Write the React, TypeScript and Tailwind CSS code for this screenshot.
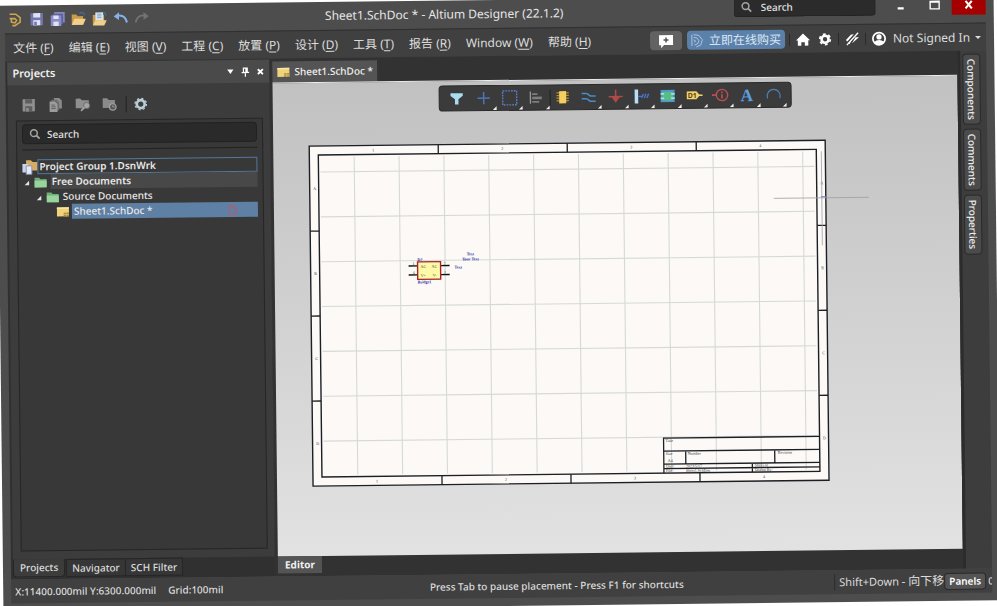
import type { ReactNode } from 'react';

const menus = [
    { label: '文件', hotkey: 'F' },
    { label: '编辑', hotkey: 'E' },
    { label: '视图', hotkey: 'V' },
    { label: '工程', hotkey: 'C' },
    { label: '放置', hotkey: 'P' },
    { label: '设计', hotkey: 'D' },
    { label: '工具', hotkey: 'T' },
    { label: '报告', hotkey: 'R' },
    { label: 'Window', hotkey: 'W' },
    { label: '帮助', hotkey: 'H' }
];

const Icon = ({ children, className = 'w-3.5 h-3.5' }: { children: ReactNode; className?: string }) => (
    <svg viewBox="0 0 16 16" fill="none" className={`${className} shrink-0 overflow-visible`} aria-hidden="true">
        {children}
    </svg>
);

const Magnifier = () => (
    <Icon className="w-3 h-3">
        <circle cx="6.5" cy="6.5" r="4.5" stroke="#a4a4a4" strokeWidth="2" />
        <path d="M10 10l4 4" stroke="#a4a4a4" strokeWidth="2.4" />
    </Icon>
);

const Floppy = ({ body, label }: { body: string; label: string }) => (
    <>
        <path d="M1 1h14v14H1z" fill={body} />
        <path d="M4 1h8v5H4zM4 9h8v6H4z" fill={label} />
        <path d="M5 11h3v4H5z" fill={body} />
    </>
);

const SheetIcon = () => (
    <Icon className="w-3.5 h-3">
        <path d="M0 2h16v12H0z" fill="#f0d27a" />
        <path d="M0 2h16v2H0z" fill="#fae6a4" />
        <path d="M9 9h7v5H9z" fill="#a88b42" />
        <path d="M9 11.5h7M12.5 9v5" stroke="#e0c068" />
    </Icon>
);

const FolderIcon = () => (
    <Icon className="w-3 h-3">
        <path d="M0 2h6l2 2h8v11H0z" fill="#6fae78" />
        <path d="M0 6h16v9H0z" fill="#98d59c" />
    </Icon>
);

const Expander = () => (
    <Icon className="w-2 h-2">
        <path d="M13 5v9H4z" fill="#e4e4e4" />
    </Icon>
);

const quickActions = [
    {
        name: 'Save',
        icon: <Floppy body="#7377ad" label="#dfe1f5" />
    },
    {
        name: 'Save all',
        icon: (
            <>
                <path d="M4 0h12v12H4z" fill="#8488bf" />
                <path d="M2 2h12v12H2z" fill="#5e6299" />
                <path d="M0 4h12v12H0z" fill="#8a8ec8" />
                <path d="M3 4h6v4H3zM3 11h6v5H3z" fill="#dfe1f5" />
            </>
        )
    },
    {
        name: 'Open',
        icon: (
            <>
                <path d="M0 3h5l2 2h6v10H0z" fill="#c99b49" />
                <path d="M3 8h13l-3 7H0z" fill="#f2d08b" />
                <path d="M9 2q4-3 6 2" stroke="#3c6f96" strokeWidth="1.5" />
            </>
        )
    },
    {
        name: 'Open project',
        icon: (
            <>
                <path d="M0 4h13v11H0z" fill="#c99b49" />
                <path d="M3 1h9v9H3z" fill="#d6e5f1" />
                <path d="M5 3h5M5 5h5M5 7h5" stroke="#7d9cb8" />
                <path d="M3 10h13l-3 6H0z" fill="#f2d08b" />
                <path d="M12 1q3 0 3 4" stroke="#3c6f96" strokeWidth="1.5" />
            </>
        )
    },
    {
        name: 'Undo',
        icon: (
            <>
                <path d="M5 5q8-1 10 8" stroke="#86b1e8" strokeWidth="2.4" />
                <path d="M0 6l6-5v9z" fill="#86b1e8" />
            </>
        )
    },
    {
        name: 'Redo',
        icon: (
            <>
                <path d="M11 5Q3 4 1 13" stroke="#737373" strokeWidth="2" />
                <path d="M16 6l-6-5v9z" fill="#737373" />
            </>
        )
    }
];

const projectActions = [
    { name: 'Save document', icon: <Floppy body="#8f8f8f" label="#5e5e5e" /> },
    {
        name: 'Compile',
        icon: (
            <>
                <path d="M6 0h6l3 3v9H6z" fill="#8a8a8a" />
                <path d="M3 2h6l3 3v9H3z" fill="#6b6b6b" />
                <path d="M1 4h6l3 3v9H1z" fill="#9c9c9c" />
                <path d="M3 8h4M3 10h5M3 12h5" stroke="#5c5c5c" />
            </>
        )
    },
    {
        name: 'Explore folder',
        icon: (
            <>
                <path d="M0 1h5l2 2h8v9H0z" fill="#8f8f8f" />
                <circle cx="12.5" cy="9" r="3.5" fill="#a4a4a4" stroke="#666" />
                <path d="M10 11l-4 4" stroke="#a4a4a4" strokeWidth="2" />
            </>
        )
    },
    {
        name: 'Folder history',
        icon: (
            <>
                <path d="M0 1h5l2 2h7v9H0z" fill="#8a8a8a" />
                <circle cx="11.5" cy="11" r="3.7" fill="#555" stroke="#a4a4a4" strokeWidth="1.4" />
                <path d="M11.5 9v2h2" stroke="#a4a4a4" />
            </>
        )
    }
];

const tools = [
    { name: 'Filter', more: false, icon: <path d="M1 2h14v3l-5 4v6H6V9L1 5z" fill="#a9dcec" /> },
    { name: 'Move', more: true, icon: <path d="M8 1v14M1 8h14" stroke="#4d76b8" strokeWidth="1.7" /> },
    {
        name: 'Select area',
        more: true,
        icon: <path d="M0 0h16v16H0z" stroke="#5a7fd0" strokeWidth="1.6" strokeDasharray="2 1.2" />
    },
    {
        name: 'Align',
        more: true,
        icon: (
            <>
                <path d="M2 1v14" stroke="#999" strokeWidth="1.5" />
                <path d="M4 3h6v2H4zM4 7h11v3H4zM4 12h8v2H4z" fill="#7d7d7d" />
            </>
        )
    },
    {
        name: 'Place part',
        more: false,
        icon: (
            <>
                <path d="M1 3h14M1 6h14M1 9h14M1 12h14" stroke="#b98e33" strokeWidth="1.4" />
                <path d="M4 1h8v14H4z" fill="#f4cf60" />
            </>
        )
    },
    {
        name: 'Place wire',
        more: true,
        icon: (
            <path d="M0 4h5q2 0 3 1.500t3 1.500h5M0 10h5q2 0 3 1.500t3 1.500h5" stroke="#4a8cc4" strokeWidth="1.7" />
        )
    },
    {
        name: 'Place power port',
        more: true,
        icon: (
            <>
                <path d="M8 0v9M0 8h16" stroke="#b04a48" strokeWidth="1.8" />
                <path d="M3 8h10l-5 7z" fill="#b04a48" />
            </>
        )
    },
    {
        name: 'Place harness',
        more: true,
        icon: (
            <>
                <path d="M0 0h4v16H0z" fill="#b8e0f6" />
                <path d="M4 8h4" stroke="#4d76d8" strokeWidth="1.5" />
                <path d="M8 10l2-5M11 10l2-5M14 10l2-5" stroke="#4d76d8" strokeWidth="1.5" />
            </>
        )
    },
    {
        name: 'Place sheet symbol',
        more: true,
        icon: (
            <>
                <path d="M1 2h14v12H1z" fill="#59bb88" stroke="#4f94d2" strokeWidth="2" />
                <path d="M0 5.500h4M0 10.500h4M12 5.500h4M12 10.500h4" stroke="#a6e5ca" strokeWidth="2" />
            </>
        )
    },
    {
        name: 'Place port',
        more: true,
        icon: (
            <>
                <path d="M-1 3h11l4 4.500-4 4.500H-1z" fill="#f3d36c" />
                <path d="M13 7.500h4" stroke="#f3d36c" strokeWidth="1.5" />
                <text x="0" y="10.500" fontSize="8" fontWeight="700" fill="#5a4414">D1</text>
            </>
        )
    },
    {
        name: 'Place directive',
        more: true,
        icon: (
            <>
                <circle cx="9.500" cy="7.500" r="6.500" stroke="#c24f50" strokeWidth="1.5" />
                <path d="M-2 7.500h6M9.500 6.500v5M9.500 3.500v2" stroke="#c24f50" strokeWidth="1.8" />
            </>
        )
    },
    {
        name: 'Place text',
        more: true,
        icon: (
            <text x="8" y="15" textAnchor="middle" fontSize="20" fontWeight="700" fontFamily="Liberation Serif, serif" fill="#5c9fe0">
                A
            </text>
        )
    },
    { name: 'Place arc', more: true, icon: <path d="M1 12A7.500 7.500 0 1 1 15 12" stroke="#4a7fb4" strokeWidth="1.4" /> }
];

const MenuDivider = () => <span className="w-px h-3 bg-[#2a2a2a]" />;

function TitleBar() {
    return (
        <header className="flex items-start h-7 pl-3 pr-2">
            <div className="flex items-center gap-[7px] h-7">
                <Icon>
                    <path d="M1 2h7l5 4v5l-6 4H4M1 7h6l2 2-2 3-4-1V8" stroke="#cda550" strokeWidth="1.8" />
                </Icon>
                {quickActions.map((action) => (
                    <button key={action.name} aria-label={action.name}>
                        <Icon>{action.icon}</Icon>
                    </button>
                ))}
            </div>
            <h1 className="flex-1 pl-1.5 text-center text-xs leading-7 text-[#e6e6e6] whitespace-nowrap">
                Sheet1.SchDoc * - Altium Designer (22.1.2)
            </h1>
            <label className="flex items-center gap-2 w-[142px] h-5 px-1.5 mr-2 rounded-b bg-[#2b2b2b] border border-t-0 border-[#222]">
                <Magnifier />
                <input
                    aria-label="Search commands"
                    placeholder="Search"
                    className="w-full bg-transparent text-[10px] leading-4 font-medium placeholder:text-[#e0e0e0] outline-none"
                />
            </label>
            <button aria-label="Minimize" className="flex items-center justify-center w-[34px] h-5">
                <Icon className="w-3 h-3"><path d="M4 12h8" stroke="#fff" strokeWidth="3" /></Icon>
            </button>
            <button aria-label="Maximize" className="flex items-center justify-center w-[34px] h-5">
                <Icon className="w-3 h-3"><path d="M2 3h12v10H2zM2 4h12" stroke="#fff" strokeWidth="1.8" /></Icon>
            </button>
            <button aria-label="Close" className="flex items-center justify-center w-[34px] h-5 bg-[#a50000]">
                <Icon className="w-2.5 h-2.5"><path d="M3 2l10 12M13 2L3 14" stroke="#fff" strokeWidth="3.400" /></Icon>
            </button>
        </header>
    );
}

function MenuBar() {
    return (
        <div className="flex items-center justify-between h-7 mx-2 pl-2 border-t border-[#303030] bg-[#404040] text-xs whitespace-nowrap">
            <nav className="flex gap-[15px]">
                {menus.map((menu) => (
                    <button key={menu.hotkey} className="text-[#dcdcdc]">
                        {menu.label} (<span className="underline underline-offset-2">{menu.hotkey}</span>)
                    </button>
                ))}
            </nav>
            <div className="flex items-center">
                <button aria-label="Feedback" className="flex items-center justify-center w-8 h-[19px] mr-[5px] rounded-sm bg-[#626262]">
                    <Icon className="w-4 h-4">
                        <path d="M1 2h14v10H6l-3 3v-3H1z" fill="#fff" />
                        <path d="M8 4.500v5M5.500 7h5" stroke="#555" strokeWidth="1.5" />
                    </Icon>
                </button>
                <button className="flex items-center gap-1 h-[19px] px-1 rounded-sm bg-[#5b81aa] text-[#dce8f4]">
                    <Icon>
                        <path d="M3 1l6 1 4 5-2 6-5 2M3 4l4 1 2 3-1 3-4 2M3 7l2 1-1 2M1 1v13" stroke="#b4cde6" />
                    </Icon>
                    立即在线购买
                </button>
                <div className="flex items-center gap-1.5 ml-1">
                    <MenuDivider />
                    <button aria-label="Home">
                        <Icon><path d="M8 1L0 9h2v6h4v-4h4v4h4V9h2z" fill="#fff" /></Icon>
                    </button>
                    <button aria-label="Settings" className="ml-0.5">
                        <Icon>
                            <circle cx="8" cy="8" r="4" stroke="#fff" strokeWidth="3" />
                            <circle cx="8" cy="8" r="6" stroke="#fff" strokeWidth="2" strokeDasharray="3.140 3.140" />
                        </Icon>
                    </button>
                    <MenuDivider />
                    <button aria-label="Notifications off">
                        <Icon>
                            <path d="M1 9l6-6h4L5 14zM8 13l4-7h4z" fill="#fff" />
                            <path d="M14 0L1 14" stroke="#404040" strokeWidth="2" />
                            <path d="M15 1L2 15" stroke="#fff" strokeWidth="1.5" />
                        </Icon>
                    </button>
                    <MenuDivider />
                </div>
                <button className="flex items-center gap-[7px] ml-1.5 pr-[5px] text-[#dcdcdc]">
                    <Icon>
                        <circle cx="8" cy="8" r="7" stroke="#fff" strokeWidth="2" />
                        <circle cx="8" cy="6" r="3" fill="#fff" />
                        <path d="M2 12q6-5 12 0-6 6-12 0z" fill="#fff" />
                    </Icon>
                    Not Signed In
                    <Icon className="w-1.5 h-1.5 -ml-0.5"><path d="M0 4h16l-8 8z" fill="#ddd" /></Icon>
                </button>
            </div>
        </div>
    );
}

function ProjectTree() {
    return (
        <ul className="text-[10px] leading-[15px] font-medium text-[#e8e8e8] whitespace-nowrap">
            <li className="flex items-center h-[15px]">
                <Icon className="w-[15px] h-[15px]">
                    <path d="M4 1h5l2 2h5v9H4z" fill="#d8ab62" />
                    <path d="M0 5h6v9H0z" fill="#c9d3e8" />
                    <path d="M4 7h6v9H4z" fill="#e4e9f5" stroke="#8591b5" />
                </Icon>
                <span className="flex-1 h-[15px] pl-px leading-[13px] border border-[#54789b] font-semibold">Project Group 1.DsnWrk</span>
            </li>
            <li className="flex items-center h-[15px]">
                <Expander />
                <span className="mx-1"><FolderIcon /></span>
                <span className="flex-1 bg-[#484848] pl-px font-semibold">Free Documents</span>
            </li>
            <li className="flex items-center h-[15px] pl-3">
                <Expander />
                <span className="mx-1"><FolderIcon /></span>
                Source Documents
            </li>
            <li className="flex items-center h-[15px] pl-[33px]">
                <SheetIcon />
                <span className="flex flex-1 items-center justify-between pl-0.5 pr-5 ml-0.5 bg-[#5f80a5]">
                    Sheet1.SchDoc *
                    <Icon className="w-2.5 h-2.5">
                        <path d="M3 1h6l4 4v10H3zM9 1v4h4" stroke="#c2545e" strokeWidth="1.5" />
                    </Icon>
                </span>
            </li>
        </ul>
    );
}

function ProjectsPanel() {
    return (
        <aside className="flex flex-col w-[264px] shrink-0 pl-0.5 bg-[#303030]">
            <div className="flex flex-col flex-1 bg-[#3c3c3c]">
                <div className="flex items-center justify-between h-6 pl-[5px] pr-1 bg-[#4a4a4a] border-t border-[#333]">
                    <h2 className="text-[11px] font-semibold text-[#f0f0f0]">Projects</h2>
                    <div className="flex items-center gap-[5px]">
                        <button aria-label="Panel menu">
                            <Icon className="w-2.5 h-2.5"><path d="M3 4h10l-5 7z" fill="#fff" /></Icon>
                        </button>
                        <button aria-label="Pin">
                            <Icon className="w-2.5 h-2.5">
                                <path d="M4 1h8v8H4z" fill="#fff" />
                                <path d="M6 3h2v6H6z" fill="#4a4a4a" />
                                <path d="M2 9h12M8 9v7" stroke="#fff" strokeWidth="2" />
                            </Icon>
                        </button>
                        <button aria-label="Close panel">
                            <Icon className="w-2.5 h-2.5"><path d="M4 4l8 8M12 4l-8 8" stroke="#fff" strokeWidth="3" /></Icon>
                        </button>
                    </div>
                </div>
                <div className="flex items-center gap-[13px] h-[35px] pl-3.5 pt-1">
                    {projectActions.map((action) => (
                        <button key={action.name} aria-label={action.name}>
                            <Icon>{action.icon}</Icon>
                        </button>
                    ))}
                    <span className="w-px h-4 -ml-1 -mr-1.5 bg-[#222]" />
                    <button aria-label="Project options">
                        <Icon>
                            <circle cx="8" cy="8" r="4.500" stroke="#b9cdd6" strokeWidth="3" />
                            <circle cx="8" cy="8" r="6.500" stroke="#b9cdd6" strokeWidth="1.500" strokeDasharray="2.500 2.600" />
                        </Icon>
                    </button>
                </div>
                <div className="flex-1 ml-2 mr-[7px] mb-2 px-[5px] pt-[3px] border border-[#262626] bg-[#383838]">
                    <label className="flex items-center gap-1.5 h-5 pl-1.5 rounded-sm border border-[#222] bg-[#2a2a2a]">
                        <Magnifier />
                        <input
                            aria-label="Search projects"
                            placeholder="Search"
                            className="w-full bg-transparent text-[10px] leading-4 font-medium placeholder:text-[#e0e0e0] outline-none"
                        />
                    </label>
                    <hr className="mt-[5px] mb-[9px] border-[#222]" />
                    <ProjectTree />
                </div>
            </div>
            <div className="flex h-5 text-[10px] leading-[17px] font-medium text-[#dcdcdc] whitespace-nowrap">
                <button className="h-[18px] px-1.5 mr-px rounded-b-sm bg-[#3c3c3c] border border-t-0 border-[#262626]">Projects</button>
                <button className="h-[18px] px-[5px] border border-[#262626] bg-[#363636]">Navigator</button>
                <button className="h-[18px] px-[5px] border border-l-0 border-[#262626] bg-[#363636]">SCH Filter</button>
            </div>
        </aside>
    );
}

const columns = [0, 1, 2, 3];
const gridX = Array.from({ length: 11 }, (_, i) => 44.85 * (i + 1));
const gridY = Array.from({ length: 7 }, (_, i) => 26 + 44.85 * i);

// One A4 sheet with its border zones, grid, title block and the placed bridge
function Schematic() {
    return (
        <svg viewBox="0 0 516 340" width="516" height="340" className="overflow-visible" fontFamily="Liberation Serif, serif" fontSize="4">
            <path d="M0 0h516v340H0z" fill="#fcf9f6" stroke="#1c1f24" strokeWidth="1.4" />
            <g stroke="#d5dad7" strokeWidth="1.1">
                {gridX.map((x) => <path key={x} d={`M${x} 11V329`} />)}
                {gridY.map((y) => <path key={y} d={`M11 ${y}H505`} />)}
            </g>
            <path d="M9 9h498v322H9z" stroke="#1c1f24" strokeWidth="1.4" fill="none" />
            <path d="M129 0v9M258 0v9M387 0v9M129 331v9M258 331v9M387 331v9M0 85h9M0 170h9M0 255h9M507 85h9M507 170h9M507 255h9" stroke="#1c1f24" strokeWidth="1.3" />
            <g fill="#444" textAnchor="middle">
                {columns.map((n) => (
                    <g key={n}>
                        <text x={64 + n * 129} y="6">{n + 1}</text>
                        <text x={64 + n * 129} y="337">{n + 1}</text>
                        <text x="5" y={44 + n * 85}>{'ABCD'[n]}</text>
                        <text x="512" y={44 + n * 85}>{'ABCD'[n]}</text>
                    </g>
                ))}
            </g>

            <path d="M351 331V296H507M351 309H507M351 322H507M351 326.500H507M373 309v13M462 309v13M439.500 322v9" stroke="#1c1f24" strokeWidth="1.3" fill="none" />
            <g fill="#333">
                <text x="353" y="300">Title</text>
                <text x="353" y="313">Size</text>
                <text x="355" y="320">A4</text>
                <text x="375" y="313">Number</text>
                <text x="465" y="313">Revision</text>
                <text x="353" y="325.500">Date:</text>
                <text x="373" y="325.500">2023/5/17</text>
                <text x="442" y="325.500">Sheet of</text>
                <text x="353" y="330">File:</text>
                <text x="373" y="330">Sheet1.SchDoc</text>
                <text x="442" y="330">Drawn By:</text>
            </g>

            <path d="M98 121h9M98 130h9M130 121h9M130 130h9" stroke="#111" strokeWidth="1.4" />
            <path d="M107 117h23v17.500h-23z" fill="#fdf9a9" stroke="#a52424" strokeWidth="1.4" />
            <g fill="#444">
                <text x="110" y="123">AC</text>
                <text x="121" y="123">AC</text>
                <text x="110" y="132">V+</text>
                <text x="122" y="132">V-</text>
                <text x="102" y="120">1</text>
                <text x="102" y="129">4</text>
                <text x="133" y="120">2</text>
                <text x="133" y="129">3</text>
            </g>
            <g fill="#20209c" fontWeight="700">
                <text x="107" y="116">D?</text>
                <text x="107" y="138.500">Bridge1</text>
                <text x="160" y="111" textAnchor="middle">Text</text>
                <text x="160" y="116" textAnchor="middle">Your Text</text>
                <text x="144" y="124">Text</text>
            </g>

            <path d="M464 57.500h95M512 11v94" stroke="#9d9da4" strokeWidth="0.800" />
            <path d="M511 56.500h6" stroke="#7777c0" strokeWidth="1" />
        </svg>
    );
}

function Editor() {
    return (
        <main className="flex flex-col flex-1 min-w-0 pl-[3px] bg-[#323232]">
            <div className="flex items-end h-6">
                <button className="flex items-center gap-1 h-[21px] pl-1 pr-1 border-r border-[#252525] bg-[#545454] text-[10px] font-medium text-[#f0f0f0] whitespace-nowrap">
                    <SheetIcon />
                    Sheet1.SchDoc *
                </button>
            </div>
            <div className="flex-1 border-t border-[#ededed] bg-linear-to-b from-[#c1c1c1] to-[#e2e2e2]">
                <div role="toolbar" className="flex w-[353px] h-[26px] mx-auto mt-1 px-1 rounded border border-[#2a2a2a] bg-[#3b3b3b]">
                    {tools.map((tool) => (
                        <button
                            key={tool.name}
                            aria-label={tool.name}
                            className={`relative flex flex-1 items-center justify-center ${tool.name === 'Place part' ? 'before:absolute before:left-0 before:top-1 before:w-px before:h-4 before:bg-[#222]' : ''}`}
                        >
                            <Icon>{tool.icon}</Icon>
                            {tool.more && (
                                <svg viewBox="0 0 4 4" className="absolute right-0 bottom-0 w-1 h-1" aria-hidden="true">
                                    <path d="M4 0v4H0z" fill="#f0f0f0" />
                                </svg>
                            )}
                        </button>
                    ))}
                </div>
                <div className="pl-9 pt-[33px]">
                    <Schematic />
                </div>
            </div>
            <div className="h-5">
                <button className="block h-[17px] px-[7px] bg-[#545454] text-[10px] leading-[17px] font-bold text-[#f0f0f0]">Editor</button>
            </div>
        </main>
    );
}

function SidePanels() {
    return (
        <nav className="flex flex-col items-center gap-1 w-[29px] shrink-0 pt-[3px] pr-1 border-l-[3px] border-[#2c2c2c] bg-[#3d3d3d]">
            {['Components', 'Comments', 'Properties'].map((name) => (
                <button key={name} className="flex justify-center w-[18px] py-1 rounded-sm border border-[#2a2a2a] bg-[#4b4b4b] text-[10px] leading-4 font-medium text-[#ececec]">
                    <span className="[writing-mode:vertical-rl]">{name}</span>
                </button>
            ))}
        </nav>
    );
}

function StatusBar() {
    return (
        <footer className="flex items-center h-6 mx-2 pl-1 bg-[#404040] text-[10px] font-medium text-[#dcdcdc] whitespace-nowrap overflow-hidden">
            <span>X:11400.000mil Y:6300.000mil</span>
            <span className="ml-3">Grid:100mil</span>
            <span className="flex-1 pl-14 text-center">Press Tab to pause placement - Press F1 for shortcuts</span>
            <span className="pl-1 border-l border-[#2c2c2c] text-[11px] font-normal">
                Shift+Down - <span className="text-xs">向下移</span>
            </span>
            <button className="h-[17px] px-1 mr-0.5 rounded-sm border border-[#2a2a2a] bg-[#545454] leading-[14px] font-semibold text-white">Panels</button>
            <span className="w-1 overflow-hidden">0</span>
        </footer>
    );
}

export default function App() {
    return (
        <div className="h-screen overflow-hidden bg-white font-['Noto_Sans','Noto_Sans_CJK_SC',sans-serif]">
            <div className="flex flex-col h-full pb-2 -rotate-[0.65deg] bg-[#4d4d4d]">
                <TitleBar />
                <MenuBar />
                <div className="flex flex-1 min-h-0 mx-2">
                    <ProjectsPanel />
                    <Editor />
                    <SidePanels />
                </div>
                <StatusBar />
            </div>
        </div>
    );
}
